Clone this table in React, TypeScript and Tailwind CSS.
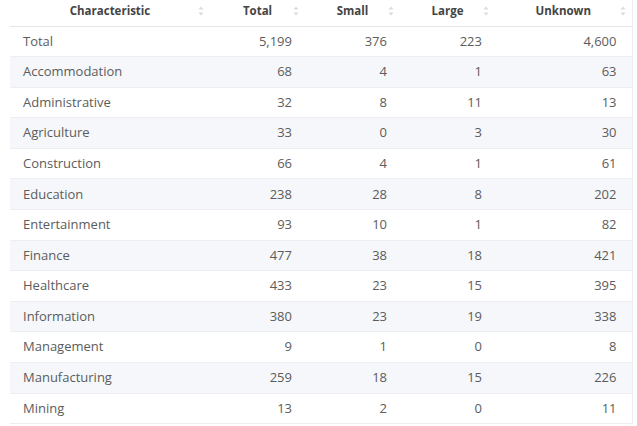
import React from 'react';

const rows: [string, string, string, string, string][] = [
  ['Total', '5,199', '376', '223', '4,600'],
  ['Accommodation', '68', '4', '1', '63'],
  ['Administrative', '32', '8', '11', '13'],
  ['Agriculture', '33', '0', '3', '30'],
  ['Construction', '66', '4', '1', '61'],
  ['Education', '238', '28', '8', '202'],
  ['Entertainment', '93', '10', '1', '82'],
  ['Finance', '477', '38', '18', '421'],
  ['Healthcare', '433', '23', '15', '395'],
  ['Information', '380', '23', '19', '338'],
  ['Management', '9', '1', '0', '8'],
  ['Manufacturing', '259', '18', '15', '226'],
  ['Mining', '13', '2', '0', '11'],
];

const SortIcon = () => (
  <svg width="6" height="10" viewBox="0 0 6 10" className="absolute right-[6px] top-[6px]">
    <path d="M3 0.5 L5.5 3.5 H0.5 Z" fill="#dcdcdc" />
    <path d="M3 9.5 L5.5 6.5 H0.5 Z" fill="#dcdcdc" />
  </svg>
);

const headers = ['Characteristic', 'Total', 'Small', 'Large', 'Unknown'];

const App: React.FC = () => {
  return (
    <div className="bg-white w-[637px] h-[426px] overflow-hidden pl-[10px] pr-[5px]" style={{ fontFamily: '"Open Sans", sans-serif' }}>
      <table className="w-[622px] table-fixed border-collapse border-r border-[#eceef2]">
        <colgroup>
          <col className="w-[200px]" />
          <col className="w-[95px]" />
          <col className="w-[95px]" />
          <col className="w-[95px]" />
          <col className="w-[137px]" />
        </colgroup>
        <thead>
          <tr className="h-[26px] border-b border-[#e3e5ea]">
            {headers.map((h) => (
              <th key={h} className="relative text-center align-top pt-[2px] text-[11.5px] font-bold text-[#444]">
                {h}
                <SortIcon />
              </th>
            ))}
          </tr>
        </thead>
        <tbody>
          {rows.map((r, i) => (
            <tr key={r[0]} className={`h-[30.6px] border-b border-[#eceef2] ${i % 2 === 1 ? 'bg-[#f5f7fa]' : 'bg-white'}`}>
              <td className="pl-[13px] text-left text-[13px] text-[#5c5c5c]">{r[0]}</td>
              {r.slice(1).map((v, j) => (
                <td key={j} className={`text-right text-[13px] text-[#5c5c5c] ${j === 3 ? 'pr-[15px]' : 'pr-[13px]'}`}>
                  {v}
                </td>
              ))}
            </tr>
          ))}
        </tbody>
      </table>
    </div>
  );
};

export default App;
